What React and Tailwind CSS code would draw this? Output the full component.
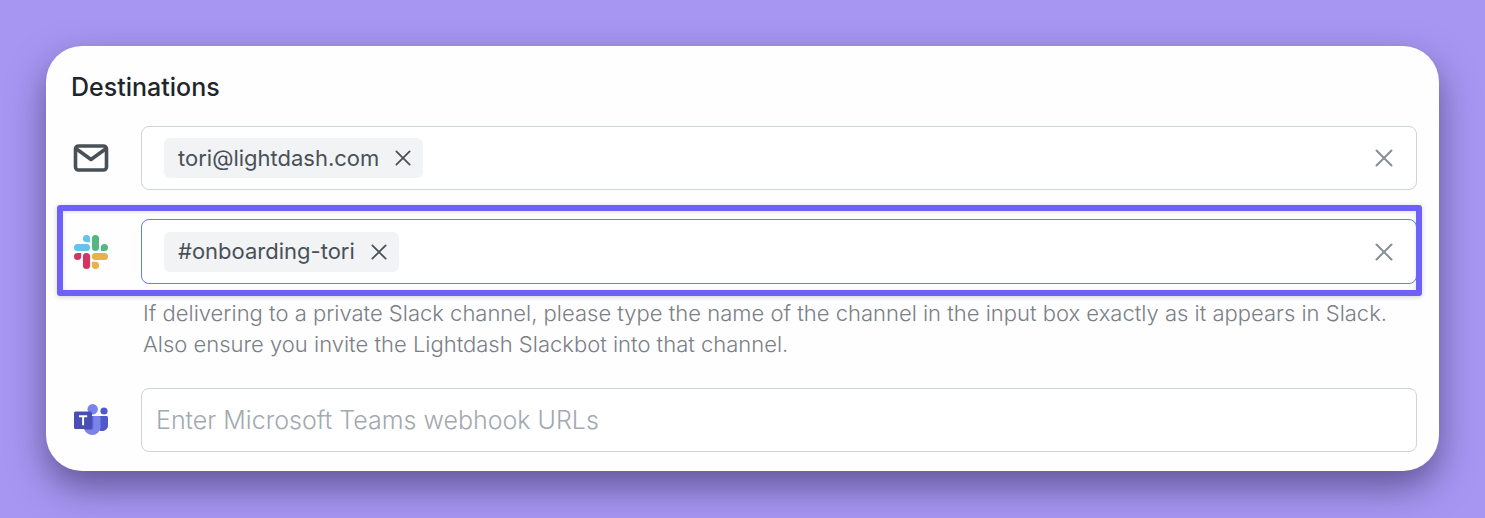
/**
 * Destinations panel
 * Email, Slack and Microsoft Teams targets of a scheduled delivery
 */

import React, { useState } from 'react'
import clsx from 'clsx'

function MailIcon() {
  return (
    <svg width="36" height="28" viewBox="0 0 36 28" fill="none" stroke="#495057" strokeWidth="3.6" strokeLinecap="round" strokeLinejoin="round">
      <rect x="2.5" y="2" width="31" height="24" rx="3" />
      <path d="M3.5 5l14.5 10.500L32.500 5" />
    </svg>
  )
}

function SlackIcon() {
  return (
    <svg width="34" height="34" viewBox="0 0 24 24">
      <path fill="#d5345f" d="M5.042 15.165a2.528 2.528 0 0 1-2.52 2.523A2.528 2.528 0 0 1 0 15.165a2.527 2.527 0 0 1 2.522-2.52h2.52v2.52zM6.313 15.165a2.527 2.527 0 0 1 2.521-2.52 2.527 2.527 0 0 1 2.521 2.52v6.313A2.528 2.528 0 0 1 8.834 24a2.528 2.528 0 0 1-2.521-2.522v-6.313z" />
      <path fill="#62c3ee" d="M8.834 5.042a2.528 2.528 0 0 1-2.521-2.52A2.528 2.528 0 0 1 8.834 0a2.528 2.528 0 0 1 2.521 2.522v2.52H8.834zM8.834 6.313a2.528 2.528 0 0 1 2.521 2.521 2.528 2.528 0 0 1-2.521 2.521H2.522A2.528 2.528 0 0 1 0 8.834a2.528 2.528 0 0 1 2.522-2.521h6.312z" />
      <path fill="#57b584" d="M18.956 8.834a2.528 2.528 0 0 1 2.522-2.521A2.528 2.528 0 0 1 24 8.834a2.528 2.528 0 0 1-2.522 2.521h-2.522V8.834zM17.688 8.834a2.528 2.528 0 0 1-2.523 2.521 2.527 2.527 0 0 1-2.52-2.521V2.522A2.527 2.527 0 0 1 15.165 0a2.528 2.528 0 0 1 2.523 2.522v6.312z" />
      <path fill="#e5b347" d="M15.165 18.956a2.528 2.528 0 0 1 2.523 2.522A2.528 2.528 0 0 1 15.165 24a2.527 2.527 0 0 1-2.52-2.522v-2.522h2.52zM15.165 17.688a2.527 2.527 0 0 1-2.52-2.523 2.526 2.526 0 0 1 2.52-2.52h6.313A2.527 2.527 0 0 1 24 15.165a2.528 2.528 0 0 1-2.522 2.523h-6.313z" />
    </svg>
  )
}

function TeamsIcon() {
  return (
    <svg width="34" height="32" viewBox="0 0 34 32">
      <circle cx="30" cy="7" r="3.6" fill="#5059c9" />
      <path fill="#5059c9" d="M24 12h8.4c.9 0 1.6.7 1.6 1.6v7.6c0 3.2-2.5 5.8-5.7 5.8-1.6 0-3.300-.6-4.300-1.600z" />
      <circle cx="18.7" cy="5.3" r="5.2" fill="#7b83eb" />
      <path fill="#7b83eb" d="M10.5 12h14.4c.9 0 1.6.7 1.6 1.6v9.9a8.3 8.3 0 0 1-16.5.4z" />
      <path fill="#5b62cc" d="M10.3 12h9v11.5c0 1.4-.9 2.3-2.3 2.3h-6.5z" />
      <rect x="0" y="7.5" width="18" height="17.5" rx="1.6" fill="#484eb4" />
      <path d="M5 12.3h8.2M9.1 12.3v9" stroke="#fff" strokeWidth="2" fill="none" />
    </svg>
  )
}

function CrossIcon({ size }) {
  return (
    <svg width={size} height={size} viewBox="0 0 18 18" fill="none" stroke="currentColor" strokeWidth="2" strokeLinecap="round">
      <path d="M1.5 1.5l15 15M16.5 1.5l-15 15" />
    </svg>
  )
}

function TagInput({ id, label, tags, onChange, focused }) {
  return (
    <div
      className={clsx(
        'flex min-w-0 flex-1 items-center rounded-lg border bg-white pr-[23px] pl-[22px]',
        focused ? 'h-[65px] border-[#5c85dc]' : 'h-16 border-[#ced4da]',
      )}
    >
      {tags.map((tag) => (
        <span key={tag} className="flex h-10 shrink-0 items-center gap-4 rounded-md bg-[#f1f3f5] pr-3 pl-[14px] text-[22px] text-[#495057]">
          {tag}
          <button type="button" aria-label={`Remove ${tag}`} onClick={() => onChange(tags.filter((t) => t !== tag))}>
            <CrossIcon size={16} />
          </button>
        </span>
      ))}
      <input id={id} aria-label={label} type="text" className="h-10 min-w-0 flex-1 bg-transparent px-3 text-[22px] outline-none" />
      <button type="button" aria-label={`Clear ${label}`} onClick={() => onChange([])} className="text-[#868e96]">
        <CrossIcon size={18} />
      </button>
    </div>
  )
}

export default function App() {
  const [emails, setEmails] = useState(['tori@lightdash.com'])
  const [channels, setChannels] = useState(['#onboarding-tori'])

  return (
    <main className="min-h-screen bg-[#a797f3] p-[46px] font-['Inter',sans-serif]">
      <section className="rounded-[36px] bg-[#fefefe] pt-6 pr-[22px] pb-[19px] pl-[25px] shadow-[0_16px_36px_rgba(30,20,60,0.5)]">
        <h2 className="mb-[22px] text-[25px] leading-[34px] font-medium text-[#212529]">Destinations</h2>

        {/* Email */}
        <div className="flex items-center">
          <label htmlFor="emails" className="flex w-[70px] shrink-0 pl-[2px]">
            <MailIcon />
          </label>
          <TagInput id="emails" label="Email addresses" tags={emails} onChange={setEmails} />
        </div>

        {/* Slack, ringed by the highlight frame */}
        <div className="relative mt-[29px] flex items-center">
          <label htmlFor="channels" className="flex w-[70px] shrink-0 pl-[3px]">
            <SlackIcon />
          </label>
          <TagInput id="channels" label="Slack channels" tags={channels} onChange={setChannels} focused />
          <div className="pointer-events-none absolute -top-[14px] -right-[5px] -bottom-3 -left-[14px] rounded-[3px] border-6 border-[#6f61f8] shadow-[0_1px_5px_rgba(0,0,0,0.18),inset_0_1px_4px_rgba(0,0,0,0.12)]" />
        </div>
        <p className="mt-[14px] ml-[72px] text-[22px] leading-[31px] font-light text-[#7a8087]">
          If delivering to a private Slack channel, please type the name of the channel in the input box exactly as it appears in Slack. Also ensure you invite the Lightdash Slackbot into that channel.
        </p>

        {/* Microsoft Teams */}
        <div className="mt-7 flex items-center">
          <label htmlFor="teams" className="flex w-[70px] shrink-0 pl-[3px]">
            <TeamsIcon />
          </label>
          <input
            id="teams"
            type="text"
            placeholder="Enter Microsoft Teams webhook URLs"
            className="h-16 min-w-0 flex-1 rounded-lg border border-[#ced4da] bg-white px-[14px] text-[25px] font-light outline-none placeholder:text-[#a3a9b0]"
          />
        </div>
      </section>
    </main>
  )
}
